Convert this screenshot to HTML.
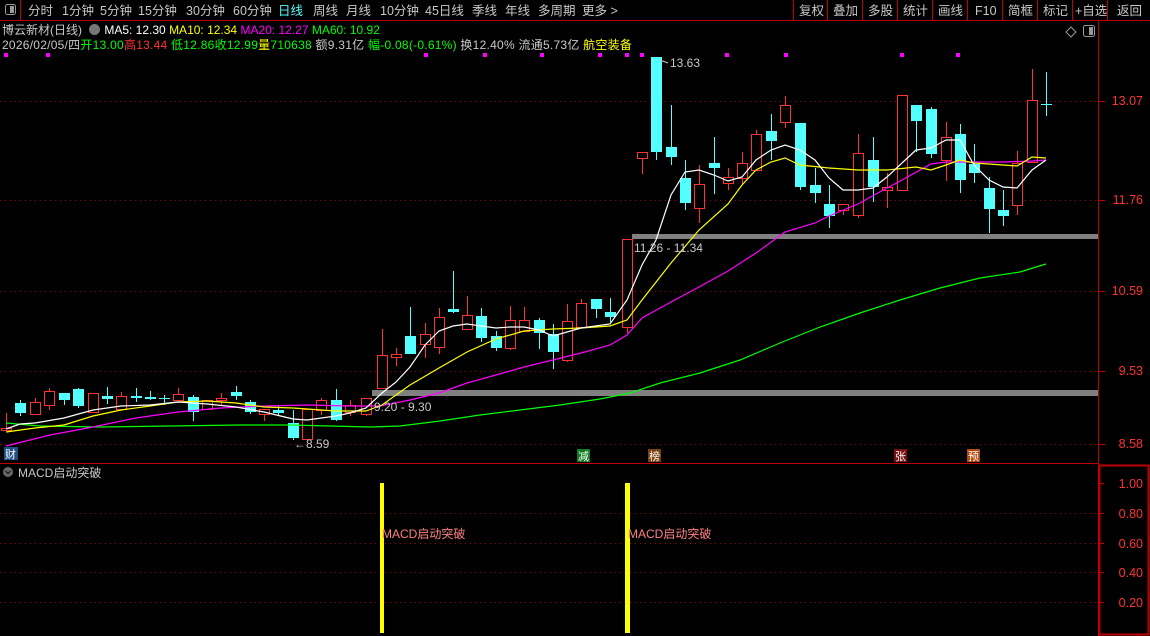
<!DOCTYPE html>
<html><head><meta charset="utf-8">
<style>
html,body{margin:0;padding:0;background:#000;width:1150px;height:636px;overflow:hidden}
body{position:relative;font-family:"Liberation Sans","Noto Sans CJK SC",sans-serif;font-size:12px;color:#c8c8c8}
.t{position:absolute;white-space:nowrap;line-height:14px}
svg{position:absolute;left:0;top:0}
</style></head><body>
<svg id="s" width="1150" height="636" xmlns="http://www.w3.org/2000/svg" font-family="Liberation Sans, Noto Sans CJK SC, sans-serif">
<line x1="0" y1="20.5" x2="1150" y2="20.5" stroke="#c00000"/>
<line x1="20.5" y1="0" x2="20.5" y2="20" stroke="#c00000"/>
<rect x="5.5" y="4.5" width="10" height="10" rx="2" fill="none" stroke="#999"/><rect x="10" y="6" width="4" height="7" fill="#999"/>
<g fill="#c8c8c8" font-size="12.5">
<text x="28" y="15">分时</text><text x="62" y="15">1分钟</text><text x="100" y="15">5分钟</text><text x="138" y="15">15分钟</text><text x="186" y="15">30分钟</text><text x="233" y="15">60分钟</text><text x="278" y="15" fill="#54ffff">日线</text><text x="313" y="15">周线</text><text x="346" y="15">月线</text><text x="380" y="15">10分钟</text><text x="425" y="15">45日线</text><text x="472" y="15">季线</text><text x="505" y="15">年线</text><text x="538" y="15">多周期</text><text x="582" y="15">更多 &gt;</text>
<text x="799" y="15">复权</text><text x="833" y="15">叠加</text><text x="868" y="15">多股</text><text x="903" y="15">统计</text><text x="938" y="15">画线</text><text x="975" y="15">F10</text><text x="1008" y="15">简框</text><text x="1043" y="15">标记</text><text x="1075" y="15">+自选</text><text x="1117" y="15">返回</text>
</g>
<g stroke="#c00000"><line x1="793.5" y1="0" x2="793.5" y2="20"/><line x1="827.5" y1="0" x2="827.5" y2="20"/><line x1="862.5" y1="0" x2="862.5" y2="20"/><line x1="897.5" y1="0" x2="897.5" y2="20"/><line x1="932.5" y1="0" x2="932.5" y2="20"/><line x1="967.5" y1="0" x2="967.5" y2="20"/><line x1="1037.5" y1="0" x2="1037.5" y2="20"/><line x1="1072.5" y1="0" x2="1072.5" y2="20"/><line x1="1107.5" y1="0" x2="1107.5" y2="20"/><line x1="1002.5" y1="0" x2="1002.5" y2="20"/></g>
<line x1="1098.5" y1="20" x2="1098.5" y2="636" stroke="#c00000"/>
<line x1="0" y1="463.5" x2="1098" y2="463.5" stroke="#c00000"/>
<rect x="1099.5" y="465.5" width="49" height="169" fill="none" stroke="#c00000" stroke-width="2"/>
<path d="M1066 32l5-5 5 5-5 5z" fill="none" stroke="#999"/>
<rect x="1083.5" y="25.5" width="11" height="11" rx="2" fill="none" stroke="#999"/><rect x="1089" y="27" width="4" height="8" fill="#999"/>
<g id="grid" stroke="#a00000" stroke-dasharray="1 4"></g>
<g fill="#ff3232" font-size="12.5" text-anchor="end">
<text x="1143" y="105">13.07</text><text x="1143" y="204">11.76</text><text x="1143" y="295">10.59</text><text x="1143" y="375">9.53</text><text x="1143" y="448">8.58</text>
<text x="1143" y="488">1.00</text><text x="1143" y="518">0.80</text><text x="1143" y="548">0.60</text><text x="1143" y="577">0.40</text><text x="1143" y="607">0.20</text>
</g>
<g id="ticks" stroke="#c00000"></g>
<g id="dots" fill="#ff00ff"></g>
<rect x="372" y="390" width="726" height="6" fill="#808080"/>
<rect x="632" y="234" width="466" height="5" fill="#808080"/>
<g id="c"></g>
<g id="ma" fill="none" stroke-width="1.2"></g>
<g fill="#c8c8c8" font-size="12">
<text x="670" y="67">13.63</text><path d="M660 60l8 3" stroke="#c8c8c8"/>
<text x="634" y="252">11.26 - 11.34</text>
<text x="374" y="411">9.20 - 9.30</text>
<text x="294" y="448">←8.59</text>
</g>
<g font-size="11">
<rect x="4" y="447" width="14" height="13" fill="#1e4f82"/><text x="5" y="458" fill="#fff">财</text>
<rect x="577" y="449" width="13" height="13" fill="#0f7a1e"/><text x="578" y="460" fill="#fff">减</text>
<rect x="648" y="449" width="13" height="13" fill="#7a4010"/><text x="649" y="460" fill="#fff">榜</text>
<rect x="894" y="449" width="13" height="13" fill="#7a0f0f"/><text x="895" y="460" fill="#fff">张</text>
<rect x="967" y="449" width="13" height="13" fill="#b04a10"/><text x="968" y="460" fill="#fff">预</text>
</g>
<circle cx="8" cy="472" r="5" fill="#666"/><path d="M5.5 471l2.5 2.5 2.5-2.5" stroke="#111" fill="none"/>
<text x="18" y="477" fill="#c8c8c8" font-size="12">MACD启动突破</text>
<rect x="380" y="483" width="4" height="150" fill="#ffff00"/>
<rect x="625" y="483" width="5" height="150" fill="#ffff00"/>
<text x="382" y="538" fill="#ff8080" font-size="12">MACD启动突破</text>
<text x="628" y="538" fill="#ff8080" font-size="12">MACD启动突破</text>
</svg>
<div class="t" style="left:2px;top:23px"><span style="color:#c8c8c8">博云新材(日线)</span> <span style="display:inline-block;width:11px;height:11px;border-radius:6px;background:#777;vertical-align:-1px;margin:0 4px"></span><span style="color:#fff">MA5: 12.30</span> <span style="color:#ffff00">MA10: 12.34</span> <span style="color:#ff00ff">MA20: 12.27</span> <span style="color:#00ff00">MA60: 10.92</span></div>
<div class="t" style="left:2px;top:38px;letter-spacing:0.25px"><span>2026/02/05/四</span><span style="color:#00ff00">开13.00</span><span style="color:#ff3232">高13.44</span><span style="color:#00ff00"> 低12.86</span><span style="color:#00ff00">收12.99</span><span style="color:#ffff00">量</span><span style="color:#00ff00">710638</span><span> 额9.31亿</span><span style="color:#00ff00"> 幅-0.08(-0.61%)</span><span> 换12.40%</span><span> 流通5.73亿</span><span style="color:#ffff00"> 航空装备</span></div>
<script>
var NS="http://www.w3.org/2000/svg";
function el(p,t,a){var e=document.createElementNS(NS,t);for(var k in a)e.setAttribute(k,a[k]);document.getElementById(p).appendChild(e);return e;}
[101,200,291,371,444].forEach(function(y){el("grid","line",{x1:0,x2:1098,y1:y+.5,y2:y+.5});el("ticks","line",{x1:1098,x2:1105,y1:y+.5,y2:y+.5});});
[513,543,572,602].forEach(function(y){el("grid","line",{x1:0,x2:1098,y1:y+.5,y2:y+.5});});
[483,513,543,572,602].forEach(function(y){el("ticks","line",{x1:1098,x2:1104,y1:y+.5,y2:y+.5});});
[6,48,426,485,542,600,627,642,727,786,902,958].forEach(function(x){el("dots","rect",{x:x-2,y:53,width:4,height:4});});
var C=[[6,428,430,413,431,1],[20,403,413,400,416,0],[35,402,414,398,414,1],[49,391,405,388,410,1],[64,393,400,393,405,0],[78,389,406,388,408,0],[93,393,412,393,412,1],[107,396,399,387,404,0],[121,396,409,392,409,1],[136,396,398,388,402,0],[150,397,399,391,400,0],[164,398,399,395,405,0],[178,394,400,388,402,1],[193,397,412,395,421,0],[207,400,409,400,409,1],[221,398,400,393,405,1],[236,392,396,386,400,0],[250,402,412,400,414,0],[264,409,414,409,421,1],[278,410,413,405,416,0],[293,423,438,410,440,0],[307,409,439,409,439,1],[321,400,410,398,415,1],[336,400,420,389,421,0],[350,405,412,400,416,1],[366,398,414,398,416,1],
[382,355,388,329,388,1],[396,354,357,348,366,1],[410,336,354,307,354,0],[425,334,344,323,358,1],[439,317,347,308,354,1],[453,309,312,271,313,0],[467,315,329,296,329,1],[481,316,338,308,342,0],[496,336,348,331,351,0],[510,320,348,306,350,1],[524,320,331,307,332,1],[539,320,333,318,349,0],[553,334,352,324,369,0],[567,321,360,304,362,1],[581,303,327,299,327,1],[596,299,309,299,318,0],[610,312,317,298,322,0],
[627,239,327,239,333,1],[642,152,158,152,174,1],[656,57,152,57,160,0],[671,147,157,105,165,0],[685,178,203,160,210,0],[699,184,208,165,223,1],[714,163,168,137,194,0],[728,177,183,168,190,1],[742,163,178,152,185,1],[756,134,170,130,170,1],[771,131,141,114,160,0],[785,105,122,96,128,1],[800,123,187,123,190,0],[815,185,193,168,203,0],[829,204,216,185,228,0],
[843,204,210,204,215,1],[858,153,215,134,218,1],[873,160,187,137,202,0],[887,187,190,173,208,1],[902,95,190,95,190,1],[916,105,121,105,152,0],[931,109,154,107,158,0],[946,137,160,122,181,1],[960,134,180,124,193,0],[974,164,173,144,183,0],[989,188,209,177,233,0],[1003,210,216,190,226,0],[1017,163,205,151,215,1],[1032,100,162,69,162,1],[1046,104,105,72,116,0]];
C.forEach(function(c){var col=c[5]?"#ff3232":"#54ffff";
el("c","line",{x1:c[0]+.5,x2:c[0]+.5,y1:c[3],y2:c[4],stroke:col});
var h=Math.max(1,c[2]-c[1]);
if(c[5])el("c","rect",{x:c[0]-4.5,y:c[1]+.5,width:10,height:h,fill:"#000",stroke:col});
else el("c","rect",{x:c[0]-5,y:c[1],width:11,height:h,fill:col});});
function pl(col,s){el("ma","polyline",{points:s,stroke:col});}
pl("#00ff00","6,423 40,426 100,427 170,426 240,425 290,425 330,426 370,427 400,426 440,421 480,415 520,410 560,405 600,399 630,393 660,383 700,373 740,360 780,343 820,327 860,313 900,300 940,288 980,278 1020,272 1046,264");
pl("#ff00ff","6,446 50,435 93,427 136,418 178,412 221,408 264,406 307,405 350,406 380,406 410,400 439,393 467,383 496,375 524,367 553,360 581,353 610,345 627,335 642,318 671,302 699,287 728,271 756,253 785,232 815,223 829,216 858,204 887,188 902,180 931,164 946,162 974,162 1003,162 1032,161 1046,160");
pl("#ffff00","6,432 35,428 64,425 93,416 121,410 150,406 178,402 207,401 236,403 264,407 293,408 336,411 366,411 382,405 410,385 439,368 467,352 496,339 524,331 553,329 581,328 610,326 627,320 642,300 671,263 699,230 728,204 742,185 756,170 771,162 785,158 800,165 829,168 858,170 887,170 916,167 931,170 946,165 960,160 974,163 989,164 1017,166 1032,157 1046,158");
pl("#ffffff","6,429 20,424 35,423 64,418 93,410 121,406 150,405 178,402 207,404 236,407 264,412 293,419 307,420 336,416 350,413 366,408 382,393 396,382 410,367 425,345 439,331 453,326 467,324 481,326 496,328 510,327 524,327 539,330 553,336 567,332 581,328 610,324 627,300 642,265 656,240 671,195 685,172 699,170 714,175 728,181 742,177 756,160 771,150 785,145 800,150 815,160 829,178 843,190 858,190 873,188 887,177 902,163 916,150 931,148 946,140 960,140 974,165 989,180 1003,187 1017,188 1032,170 1046,160");
</script>
</body></html>
